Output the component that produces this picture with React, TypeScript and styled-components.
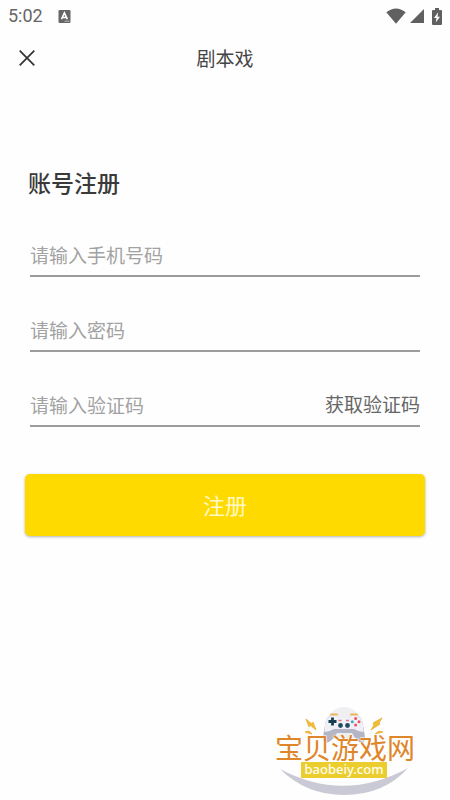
import React from "react";
import styled, { createGlobalStyle } from "styled-components";

const GlobalStyle = createGlobalStyle`
  * { box-sizing: border-box; }
  body { margin: 0; background: #fefefe; }
  body, input, button {
    font-family: Roboto, "Noto Sans CJK SC", sans-serif;
  }
`;

const Page = styled.div`
  min-height: 100vh;
  display: flex;
  flex-direction: column;
`;

const StatusBar = styled.div`
  display: flex;
  align-items: center;
  height: 32px;
  padding: 0 8px;
  color: #666;
`;

const Clock = styled.span`
  width: 50px;
  font-size: 18px;
  line-height: 32px;
`;

const StatusIcons = styled.div`
  display: flex;
  align-items: center;
  gap: 4px;
  margin-left: auto;
`;

const Battery = styled.span`
  display: flex;
  margin-left: 4px;
`;

const TopBar = styled.header`
  display: grid;
  grid-template-columns: 54px 1fr 54px;
  align-items: center;
  height: 52px;
`;

const CloseButton = styled.button`
  display: flex;
  align-items: center;
  justify-content: center;
  height: 52px;
  padding: 0;
  border: 0;
  background: none;
`;

const Title = styled.h1`
  margin: 0;
  padding-top: 3px;
  font-size: 19px;
  font-weight: 400;
  line-height: 28px;
  text-align: center;
  color: #444;
`;

const Form = styled.form`
  display: flex;
  flex-direction: column;
  padding: 84px 25px 0;
`;

const Heading = styled.h2`
  margin: 0 3px 32px;
  font-size: 23px;
  font-weight: 500;
  line-height: 34px;
  color: #3a3a3a;
`;

const Field = styled.div`
  display: flex;
  align-items: center;
  height: 43px;
  margin: 0 5px 32px;
  padding-top: 3px;
  border-bottom: 2px solid #9c9c9c;
`;

const Input = styled.input`
  flex: 1;
  min-width: 0;
  height: 38px;
  padding: 0;
  border: 0;
  outline: 0;
  background: none;
  font-size: 19px;
  color: #444;
  &::placeholder { color: #a2a2a2; opacity: 1; }
`;

const CodeButton = styled.button`
  padding: 0;
  border: 0;
  background: none;
  font-size: 19px;
  line-height: 28px;
  color: #666;
`;

const SubmitButton = styled.button`
  height: 62px;
  margin: 15px 0 0;
  padding: 0 0 3px;
  border: 0;
  border-radius: 5px;
  background: #ffda00;
  box-shadow: 0 1px 3px rgba(0, 0, 0, 0.3);
  font-size: 22px;
  color: #fff9c8;
`;

const Footer = styled.footer`
  display: flex;
  justify-content: flex-end;
  margin-top: auto;
  padding: 24px 25px 0 0;
`;

const fields = [
  { id: "phone", label: "请输入手机号码", type: "tel" },
  { id: "password", label: "请输入密码", type: "password" },
  { id: "code", label: "请输入验证码", type: "text" },
];

const InputMethodIcon = () => (
  <svg width="13" height="13" viewBox="0 0 13 13" aria-hidden="true">
    <rect x="0.5" width="12" height="13" rx="1" fill="#666" />
    <path d="M3.5 9.2 6.4 3l2.9 6.2M4.5 7.5h3.8" fill="none" stroke="#fff" strokeWidth="1.6" />
    <path d="M6.5 11.2h5" stroke="#bbb" />
  </svg>
);

const WifiIcon = () => (
  <svg width="20" height="16" viewBox="0 0 20 16" aria-hidden="true">
    <path d="M0.3 4.2Q10-3.4 19.7 4.2L10 15.8Z" fill="#606060" />
  </svg>
);

const SignalIcon = () => (
  <svg width="14" height="14" viewBox="0 0 14 14" aria-hidden="true">
    <path d="M14 0v14H0Z" fill="#606060" />
  </svg>
);

const BatteryIcon = () => (
  <svg width="10" height="17" viewBox="0 0 10 17" aria-hidden="true">
    <path d="M3 0h4v2h2q1 0 1 1v13q0 1-1 1H1q-1 0-1-1V3q0-1 1-1h2Z" fill="#606060" />
    <path d="M6.2 4.2 2 10h2.5l-.8 4.6L8 8.7H5.5Z" fill="#fff" />
  </svg>
);

const CloseIcon = () => (
  <svg width="16" height="16" viewBox="0 0 16 16" aria-hidden="true">
    <path d="M0.7 0.7l14.6 14.6M15.3 0.7L0.7 15.3" stroke="#333" strokeWidth="1.7" />
  </svg>
);

const SiteLogo = () => (
  <svg width="160" height="105" viewBox="0 0 160 105" role="img" aria-label="宝贝游戏网 baobeiy.com">
    <path d="M15 74Q79 108 143 73Q119 100 79 100Q41 100 15 74Z" fill="#c9cad6" />
    <circle cx="79" cy="29" r="17" fill="#efeff1" />
    <path d="M66 19.5h6M86 19.5h6" stroke="#e9b55c" strokeWidth="2" strokeLinecap="round" />
    <path d="M65 21Q61 22 60 30L58 42Q58 50 64 47Q69 44 72 38H87Q90 44 94 47Q100 50 100 42L98 30Q97 22 93 21H86L84 23H74L72 21Z" fill="#b4b6c6" />
    <path d="M66 21Q61 22 60 30L59.5 37Q64 37 69 34H89Q94 37 98.5 37L98 30Q97 22 92 21H86L84 23H74L72 21Z" fill="#f0f0f6" />
    <path d="M67.5 22.5v8M63.5 26.5h8" stroke="#173e54" strokeWidth="2.8" />
    <path d="M73.5 25.5h3M81 25.5h3" stroke="#e47383" strokeWidth="1.4" />
    <circle cx="75.5" cy="30.5" r="2.4" fill="#214d60" />
    <circle cx="82.5" cy="30.5" r="2.4" fill="#214d60" />
    <circle cx="90.6" cy="23.5" r="1.5" fill="#e85362" />
    <circle cx="90.6" cy="30" r="1.5" fill="#e85362" />
    <circle cx="87.3" cy="26.8" r="1.5" fill="#3caac1" />
    <circle cx="94" cy="26.8" r="1.5" fill="#e85362" />
    <path d="M41 24l6 5 1-2 3 8-6-5-1 2ZM117 23l-9 5 1 2-3 5 9-6-1-1ZM40 37l4-1 3 3-4-1ZM118 37l-4-1-4 3 4-1Z" fill="#f0bd35" stroke="#e8ad32" strokeWidth="0.8" />
    <text x="10" y="64" fontFamily='"Noto Sans CJK SC", sans-serif' fontSize="28" fill="#e0862a" stroke="#fff" strokeWidth="1" paintOrder="stroke" strokeLinejoin="round">宝贝游戏网</text>
    <rect x="36" y="67" width="86" height="16" fill="#ebce2d" />
    <text x="79" y="79" textAnchor="middle" fontFamily='"Noto Sans", sans-serif' fontSize="13" fontWeight="500" fill="#fffdf0">baobeiy.com</text>
  </svg>
);

export default function App() {
  return (
    <Page>
      <GlobalStyle />
      <StatusBar>
        <Clock>5:02</Clock>
        <InputMethodIcon />
        <StatusIcons>
          <WifiIcon />
          <SignalIcon />
          <Battery>
            <BatteryIcon />
          </Battery>
        </StatusIcons>
      </StatusBar>
      <TopBar>
        <CloseButton type="button" aria-label="关闭">
          <CloseIcon />
        </CloseButton>
        <Title>剧本戏</Title>
      </TopBar>
      <Form onSubmit={(event: React.FormEvent) => event.preventDefault()}>
        <Heading>账号注册</Heading>
        {fields.map(({ id, label, type }) => (
          <Field key={id}>
            <Input id={id} type={type} placeholder={label} aria-label={label} />
            {id === "code" && <CodeButton type="button">获取验证码</CodeButton>}
          </Field>
        ))}
        <SubmitButton type="submit">注册</SubmitButton>
      </Form>
      <Footer>
        <SiteLogo />
      </Footer>
    </Page>
  );
}
